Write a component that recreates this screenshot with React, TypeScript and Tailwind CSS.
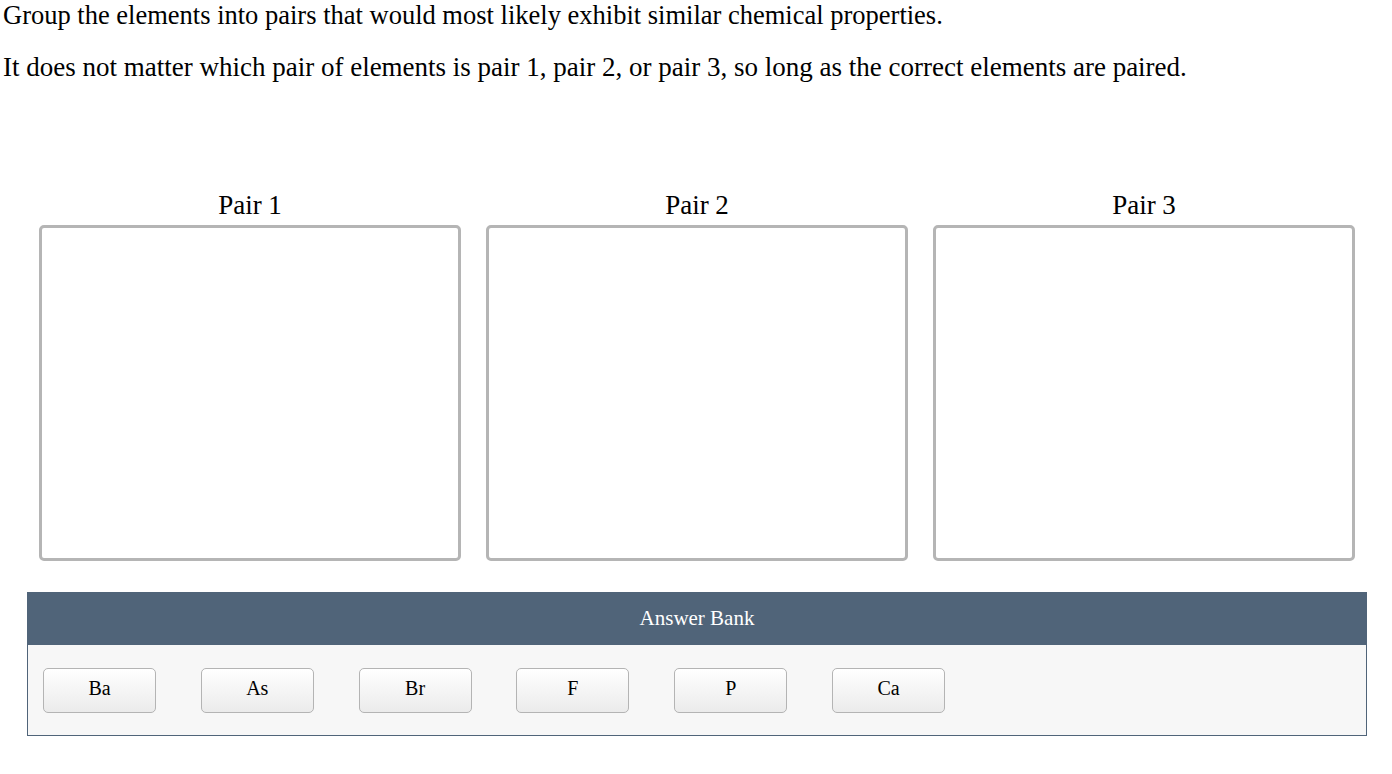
import React from "react";

const serif = { fontFamily: '"Liberation Serif", "Times New Roman", serif' };

export default function App() {
  const items = ["Ba", "As", "Br", "F", "P", "Ca"];
  return (
    <div className="w-[1392px] h-[774px] bg-white text-black font-['Liberation_Serif',serif]" style={serif}>
      <div className="pl-[3px] pt-[0px]">
        <p className="text-[26.5px] leading-[30px]" style={serif}>Group the elements into pairs that would most likely exhibit similar chemical properties.</p>
        <p className="text-[27px] leading-[30px] mt-[22px]" style={serif}>It does not matter which pair of elements is pair 1, pair 2, or pair 3, so long as the correct elements are paired.</p>
      </div>
      <div className="ml-[39px] w-[1316px] mt-[108px] grid grid-cols-3 gap-x-[25px]">
        {["Pair 1", "Pair 2", "Pair 3"].map((p) => (
          <div key={p} className="flex flex-col">
            <div className="text-[27px] leading-[30px] text-center" style={serif}>{p}</div>
            <div className="mt-[5px] h-[336px] border-[3px] border-[#b5b5b5] rounded-[5px] bg-white" />
          </div>
        ))}
      </div>
      <div className="ml-[27px] w-[1340px] mt-[31px]">
        <div className="h-[53px] bg-[#506479] text-white text-[21px] flex items-center justify-center">Answer Bank</div>
        <div className="h-[91px] bg-[#f7f7f7] border border-t-0 border-[#506479] flex items-start pt-[23px] pl-[15px] gap-x-[44.8px]">
          {items.map((it) => (
            <div
              key={it}
              className="w-[113px] h-[45px] pb-[6px] rounded-[5px] border border-[#b4b4b4] bg-gradient-to-b from-white to-[#ebebeb] flex items-center justify-center text-[20px]"
            >
              {it}
            </div>
          ))}
        </div>
      </div>
    </div>
  );
}
